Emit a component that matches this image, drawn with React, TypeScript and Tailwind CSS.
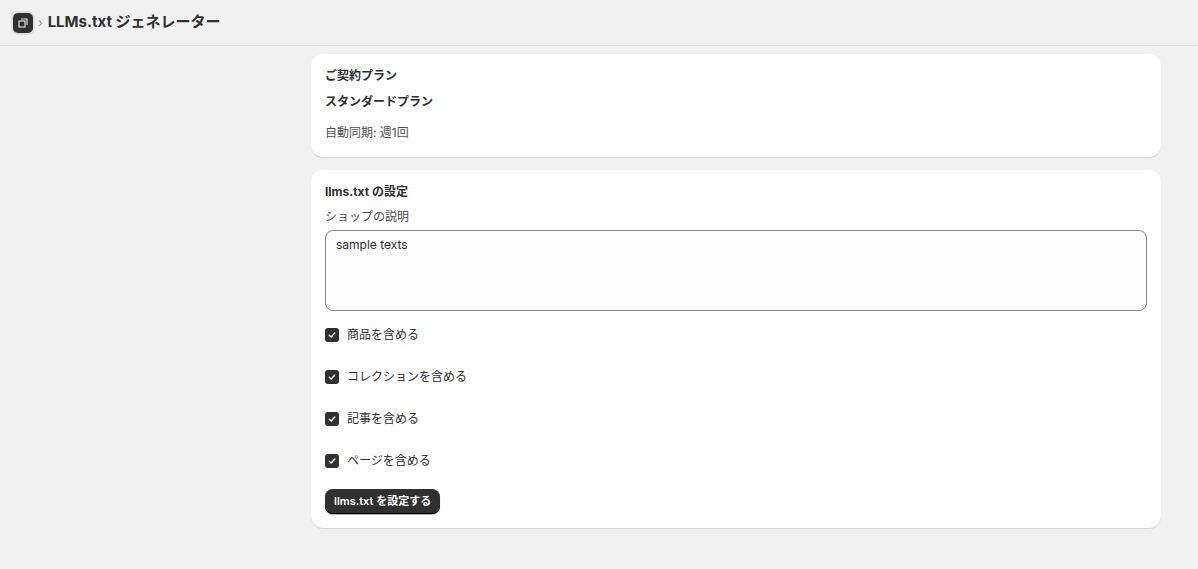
const F = { fontFamily: '"Inter","Noto Sans CJK JP",sans-serif' };

function Check({ label }: { label: string }) {
  return (
    <div className="flex items-center gap-2 h-[20px]">
      <span className="w-[14px] h-[14px] rounded-[3px] bg-[#303030] flex items-center justify-center">
        <svg width="10" height="10" viewBox="0 0 10 10"><path d="M2.3 5.2 4.2 7 7.7 3" fill="none" stroke="white" strokeWidth="1.5" strokeLinecap="round" strokeLinejoin="round"/></svg>
      </span>
      <span className="text-[12px] text-[#303030]">{label}</span>
    </div>
  );
}

export default function App() {
  return (
    <div style={F} className="min-h-[569px] bg-[#f1f1f1] text-[#303030]">
      <div className="h-[46px] border-b border-[#e3e3e3] flex items-center px-[13px] gap-[5px]">
        <span className="w-[20px] h-[20px] rounded-[5px] bg-[#303030] flex items-center justify-center shadow-[0_0_0_2px_#e0e0e0]">
          <svg width="10" height="10" viewBox="0 0 10 10"><rect x="1" y="3" width="6" height="6" fill="none" stroke="#ddd" strokeWidth="1.2"/><path d="M3 1h6v6" fill="none" stroke="#ddd" strokeWidth="1.2"/></svg>
        </span>
        <span className="text-[#8a8a8a] text-[12px]">›</span>
        <span className="text-[15px] font-bold text-[#303030]">LLMs.txt ジェネレーター</span>
      </div>
      <div className="w-[850px] ml-[311px] pt-[8px] flex flex-col gap-[13px]">
        <div className="bg-white rounded-[12px] shadow-[0_1px_0_#d4d4d4] px-[14px] pt-[14px] pb-[16px] flex flex-col">
          <div className="text-[12px] font-bold h-[16px] leading-[16px]">ご契約プラン</div>
          <div className="text-[12px] font-bold mt-[10px] h-[16px] leading-[16px]">スタンダードプラン</div>
          <div className="text-[12px] text-[#505050] mt-[15px] h-[16px] leading-[16px]">自動同期: 週1回</div>
        </div>
        <div className="bg-white rounded-[12px] shadow-[0_1px_0_#d4d4d4] px-[14px] pt-[14px] pb-[14px] flex flex-col">
          <div className="text-[12px] font-bold h-[16px] leading-[16px]">llms.txt の設定</div>
          <div className="text-[12px] text-[#505050] mt-[9px] h-[16px] leading-[16px]">ショップの説明</div>
          <div className="mt-[5px] h-[81px] border border-[#8a8a8a] rounded-[8px] bg-[#fdfdfd] px-[10px] py-[5px] text-[12px]">sample texts</div>
          <div className="mt-[14px] flex flex-col gap-[22px]">
            <Check label="商品を含める" />
            <Check label="コレクションを含める" />
            <Check label="記事を含める" />
            <Check label="ページを含める" />
          </div>
          <button className="mt-[18px] self-start h-[25px] px-[9px] rounded-[8px] bg-[#303030] text-white text-[11px] font-semibold shadow-[inset_0_-1px_0_#000,0_1px_1px_#0005]">llms.txt を設定する</button>
        </div>
      </div>
    </div>
  );
}
